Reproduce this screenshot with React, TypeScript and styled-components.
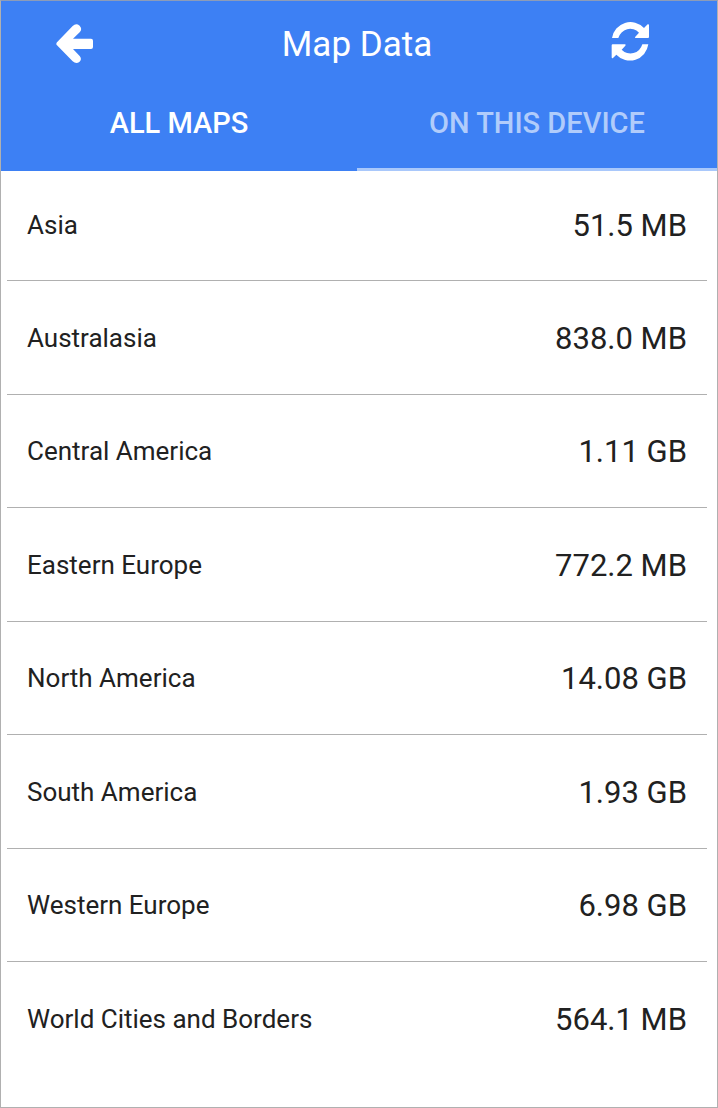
import React, { useState } from 'react';
import styled, { createGlobalStyle } from 'styled-components';

const GlobalStyle = createGlobalStyle`
  * { box-sizing: border-box; }
  body { margin: 0; background: #fff; font-family: Roboto, "Liberation Sans", sans-serif; color: #212121; }
`;

const Screen = styled.div`
  min-height: 100vh;
  border: 1px solid #b0b0b0;
  border-top-color: #8d9cb8;
`;

const Header = styled.header`
  background: #3d80f4;
  color: #fff;
`;

const TitleBar = styled.div`
  display: grid;
  grid-template-columns: 48px 1fr 92px;
  align-items: center;
  height: 84px;
  padding: 2px 14px 0 54px;
`;

const Title = styled.h1`
  margin: 0;
  padding-top: 2px;
  text-align: center;
  font-size: 35px;
  line-height: 44px;
  font-weight: 400;
`;

const IconButton = styled.button`
  justify-self: start;
  padding: 0;
  border: 0;
  background: none;
  color: inherit;
  cursor: pointer;
  svg { display: block; fill: currentColor; }
`;

const Tabs = styled.div`
  display: grid;
  grid-template-columns: 178fr 180fr;
`;

const Tab = styled.button<{ $active: boolean }>`
  height: 86px;
  padding: 0 0 7px;
  border: 0;
  border-bottom: 3px solid ${p => (p.$active ? '#3d80f4' : '#a9c8fb')};
  background: none;
  color: ${p => (p.$active ? '#fff' : '#b1ccfb')};
  font: 500 29px/36px Roboto, "Liberation Sans", sans-serif;
  cursor: pointer;
`;

const List = styled.ul`
  list-style: none;
  margin: 0;
  padding: 0 10px 0 6px;
`;

const Row = styled.li`
  display: flex;
  justify-content: space-between;
  align-items: center;
  height: 113px;
  padding: 0 20px;
  border-bottom: 1px solid #b0b0b0;
  &:nth-child(even) { height: 114px; }
  &:first-child { height: 110px; padding-bottom: 2px; }
  &:last-child { border-bottom: 0; }
`;

const Name = styled.span`
  font-size: 26px;
  line-height: 32px;
`;

const Size = styled.span`
  padding-top: 2px;
  font-size: 31px;
  line-height: 36px;
`;

const BackIcon = () => (
  <svg width="38" height="40" viewBox="45 42 114 120" aria-hidden="true">
    <path d="M51 97 L98 48 Q108 38 119 47 Q128 57 119 67 L99 86 H153 Q159 86 159 92 V111 Q159 117 153 117 H99 L119 138 Q127 148 118 156 Q108 163 98 154 L51 106 Q47 102 51 97Z" />
  </svg>
);

const RefreshIcon = () => (
  <svg width="39" height="46" viewBox="47 33 117 138" aria-hidden="true">
    <path d="M50 84 A56 57 0 0 1 146 54 L157 43 Q161 41 161 46 V81 Q161 84 158 84 H121 Q117 83 120 80 L131 68 A37 38 0 0 0 69 84 Z" />
    <path d="M159 103 A56 57 0 0 1 63 134 L53 144 Q49 146 49 141 V106 Q49 103 52 103 H89 Q93 104 90 107 L79 119 A37 38 0 0 0 141 103 Z" />
  </svg>
);

const maps = [
  ['Asia', '51.5 MB'],
  ['Australasia', '838.0 MB'],
  ['Central America', '1.11 GB'],
  ['Eastern Europe', '772.2 MB'],
  ['North America', '14.08 GB'],
  ['South America', '1.93 GB'],
  ['Western Europe', '6.98 GB'],
  ['World Cities and Borders', '564.1 MB'],
];

export default function App() {
  const [tab, setTab] = useState(0);
  return (
    <Screen>
      <GlobalStyle />
      <Header>
        <TitleBar>
          <IconButton aria-label="Back"><BackIcon /></IconButton>
          <Title>Map Data</Title>
          <IconButton aria-label="Refresh"><RefreshIcon /></IconButton>
        </TitleBar>
        <Tabs role="tablist">
          {['ALL MAPS', 'ON THIS DEVICE'].map((label, i) => (
            <Tab key={label} role="tab" aria-selected={tab === i} $active={tab === i} onClick={() => setTab(i)}>
              {label}
            </Tab>
          ))}
        </Tabs>
      </Header>
      <List>
        {maps.map(([name, size]) => (
          <Row key={name}>
            <Name>{name}</Name>
            <Size>{size}</Size>
          </Row>
        ))}
      </List>
    </Screen>
  );
}
